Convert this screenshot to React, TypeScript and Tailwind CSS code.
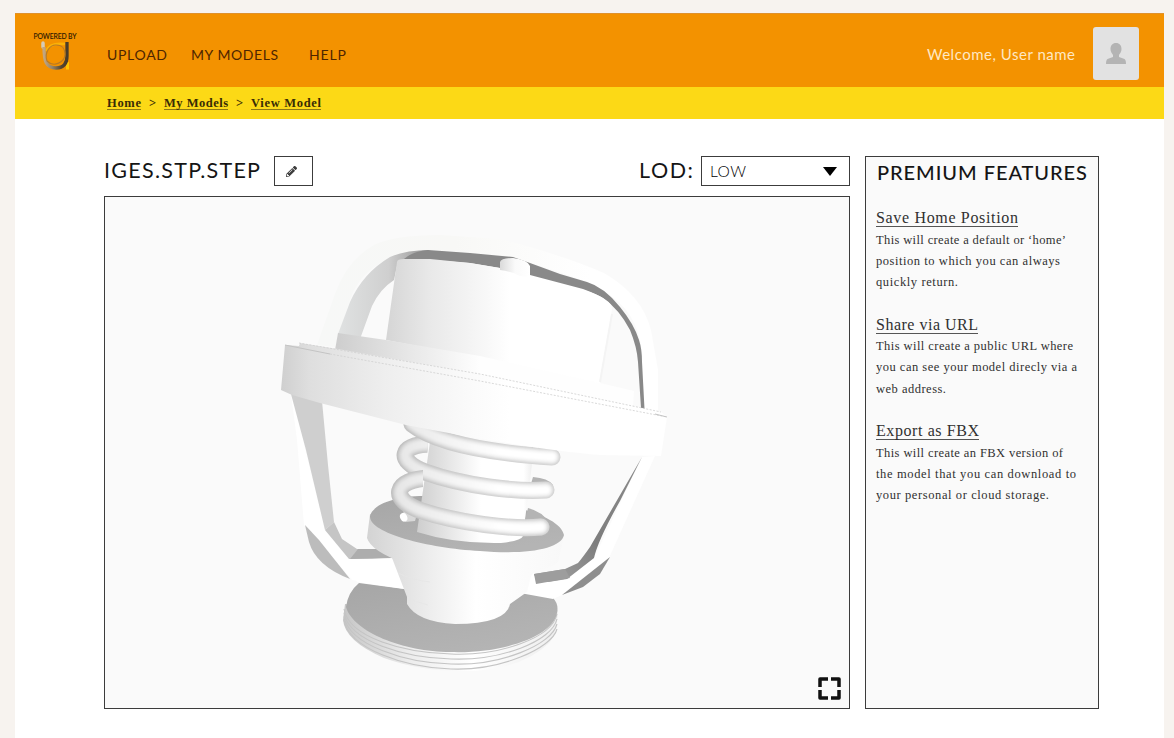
import { useLayoutEffect, useRef, useState, type ReactNode } from "react";
import { FaPencilAlt } from "react-icons/fa";

/* One line of text whose tracking is worked out so that it fills its measure. */
function Line({ width, children, className = "" }: { width: number; children: string; className?: string }) {
  const ref = useRef<HTMLSpanElement>(null);
  const [tracking, setTracking] = useState(0);

  useLayoutEffect(() => {
    const el = ref.current;
    if (!el) return;
    const previous = el.style.letterSpacing;
    el.style.letterSpacing = "0px";
    const natural = el.getBoundingClientRect().width;
    el.style.letterSpacing = previous;
    setTracking((width - natural) / Math.max(1, children.length - 1));
  }, [width, children]);

  return (
    <div className={`shrink-0 whitespace-nowrap ${className}`} style={{ width }}>
      <span ref={ref} className="inline-block" style={{ letterSpacing: tracking }}>{children}</span>
    </div>
  );
}

function Logo() {
  return (
    <div className="flex w-[46px] flex-col items-center pt-[18px]">
      <Line width={43} className="text-[6.8px] leading-[8px] font-semibold text-[#301900]">POWERED BY</Line>
      <svg width="34" height="32" viewBox="0 0 34 32" fill="none">
        <defs>
          <linearGradient id="logoDark" x1="0" y1="0" x2="1" y2="0">
            <stop offset="0" stopColor="#c3a680" />
            <stop offset="0.35" stopColor="#94856c" />
            <stop offset="0.75" stopColor="#55462f" />
            <stop offset="1" stopColor="#493c2b" />
          </linearGradient>
        </defs>
        <path d="M29.500 22v7.500" stroke="#ffc400" strokeWidth="3" />
        <path d="M8 11C11 4 18 3 27 4" stroke="#fbb106" strokeWidth="2.5" />
        <path d="M5 3v4" stroke="#d5cbb8" strokeWidth="3.500" strokeLinecap="round" />
        <path d="M6 7c0 14 2 21 12 21 8 0 11-5 11-12V2" stroke="url(#logoDark)" strokeWidth="3.300" />
        <path d="M9 21C6 12 12 5 18 5c7 0 9 5 9 9 0 8-11 14-18 7" stroke="#b87a24" strokeWidth="1.1" />
      </svg>
    </div>
  );
}

const strands = [
  { d: "M432 444C399 444 396 461 425 472C464 486 516 492 546 490", clip: "strandA" },
  { d: "M430 478C393 479 389 500 422 511C459 523 513 530 541 527", clip: "strandB" },
  { d: "M412 424Q445 450 552 457", clip: "strandTop" },
];

function Model() {
  return (
    <svg viewBox="105 197 744 511" className="block h-full w-full" role="img" aria-label="3D model">
      <defs>
        <linearGradient id="body" gradientUnits="userSpaceOnUse" x1="388" y1="0" x2="510" y2="0">
          <stop offset="0" stopColor="#d6d6d6" /><stop offset=".35" stopColor="#e9e9e9" />
          <stop offset=".8" stopColor="#f8f8f8" /><stop offset="1" stopColor="#fff" />
        </linearGradient>
        <linearGradient id="ring" gradientUnits="userSpaceOnUse" x1="281" y1="0" x2="510" y2="0">
          <stop offset="0" stopColor="#cfcfcf" /><stop offset=".12" stopColor="#dedede" />
          <stop offset=".45" stopColor="#eeeeee" /><stop offset=".85" stopColor="#fbfbfb" /><stop offset="1" stopColor="#fff" />
        </linearGradient>
        <linearGradient id="step" gradientUnits="userSpaceOnUse" x1="337" y1="0" x2="480" y2="0">
          <stop offset="0" stopColor="#cecece" /><stop offset=".5" stopColor="#e7e7e7" /><stop offset="1" stopColor="#fefefe" />
        </linearGradient>
        <linearGradient id="knob" x1="0" y1="0" x2="1" y2="0">
          <stop offset="0" stopColor="#dadada" /><stop offset=".5" stopColor="#fafafa" /><stop offset="1" stopColor="#fff" />
        </linearGradient>
        <linearGradient id="strap" x1="0" y1="0" x2="1" y2="0">
          <stop offset="0" stopColor="#e0e2e2" /><stop offset=".55" stopColor="#cfcfcf" /><stop offset="1" stopColor="#909090" />
        </linearGradient>
        <linearGradient id="outer" gradientUnits="userSpaceOnUse" x1="320" y1="0" x2="590" y2="0">
          <stop offset="0" stopColor="#f7f8f7" /><stop offset=".5" stopColor="#f8f8f6" /><stop offset="1" stopColor="#fff" />
        </linearGradient>
        <linearGradient id="shaft" gradientUnits="userSpaceOnUse" x1="417" y1="0" x2="533" y2="0">
          <stop offset="0" stopColor="#cecece" /><stop offset=".25" stopColor="#e4e4e4" />
          <stop offset=".55" stopColor="#fff" /><stop offset=".92" stopColor="#fff" /><stop offset="1" stopColor="#ededed" />
        </linearGradient>
        <linearGradient id="cup" gradientUnits="userSpaceOnUse" x1="367" y1="0" x2="565" y2="0">
          <stop offset="0" stopColor="#d3d3d3" /><stop offset=".3" stopColor="#ececec" />
          <stop offset=".55" stopColor="#fff" /><stop offset="1" stopColor="#f8f8f8" />
        </linearGradient>
        <linearGradient id="disc" x1="0" y1="0" x2=".6" y2="1">
          <stop offset="0" stopColor="#a6a6a6" /><stop offset="1" stopColor="#b4b4b4" />
        </linearGradient>
        <linearGradient id="rim" x1="0" y1="0" x2="1" y2="0">
          <stop offset="0" stopColor="#c6c6c6" /><stop offset=".3" stopColor="#ececec" /><stop offset=".6" stopColor="#fff" /><stop offset="1" stopColor="#eee" />
        </linearGradient>
        <linearGradient id="dark" x1="0" y1="1" x2="1" y2="0">
          <stop offset="0" stopColor="#a8a8a8" /><stop offset=".45" stopColor="#7d7d7d" /><stop offset="1" stopColor="#8b8b8b" />
        </linearGradient>
        <linearGradient id="tube" gradientUnits="userSpaceOnUse" x1="395" y1="0" x2="550" y2="0">
          <stop offset="0" stopColor="#bcbcbc" /><stop offset=".5" stopColor="#cfcfcf" /><stop offset="1" stopColor="#d2d2d2" />
        </linearGradient>
        <linearGradient id="tubeMid" gradientUnits="userSpaceOnUse" x1="395" y1="0" x2="500" y2="0">
          <stop offset="0" stopColor="#d6d6d6" /><stop offset="1" stopColor="#f0f0f0" />
        </linearGradient>
        <linearGradient id="tubeLight" gradientUnits="userSpaceOnUse" x1="395" y1="0" x2="500" y2="0">
          <stop offset="0" stopColor="#e6e6e6" /><stop offset=".5" stopColor="#f3f3f3" /><stop offset="1" stopColor="#fff" />
        </linearGradient>
        <filter id="soft" x="-10%" y="-30%" width="120%" height="160%"><feGaussianBlur stdDeviation="1.2" /></filter>
        <clipPath id="strandA"><path d="M380 400H430L427 462L600 470V600H380Z" /></clipPath>
        <clipPath id="strandB"><path d="M380 400H423V497L600 510V600H380Z" /></clipPath>
        <clipPath id="strandTop"><path d="M380 400H600V600H380Z" /></clipPath>
      </defs>

      {/* outer handle */}
      <path fill="url(#outer)" d="M317 345L335 294Q347 260 374 245Q394 235 440 235L500 239Q560 254 604 273Q642 295 651 330L658 370V412L644 410L642 353Q638 310 603 291Q585 279 530 263Q500 253 425 250Q364 257 350 300L335 347Z" />
      <path fill="url(#strap)" d="M338 334L350 302Q363 273 390 257Q405 250 430 250L397 266L394 280Q380 289 372 306L360 339Z" />
      <path fill="#898989" d="M404 259Q413 251 428 250L470 253L513 257L530 263L560 274L587 282Q604 287 620 307Q634 324 639 340Q642 349 642 362L644.500 409L641 408L638 362Q637 347 630 330Q619 309 603 298Q592 291 560 284L500 268L470 263L430 260Z" />
      <path fill="url(#body)" d="M386 340L397 262Q397 259 404 259L430 259L470 263L500 268L530 275L583 289Q613 300 612 309L600 384L480 358Z" />
      <path fill="none" stroke="#f4f4f4" d="M612 314L600 382" strokeWidth="2" />
      <path fill="url(#knob)" d="M500 262Q501 258 513 258Q528 260 530 266V276Q521 278 514 273Q507 271 500 270Z" />

      {/* stepped collar */}
      <path fill="url(#step)" d="M335 350L338 333L386 340L480 356L600 383L634 391L633 407L480 384Z" />

      {/* legs */}
      <path fill="#fff" d="M291 394L303 440L325 530L349 559L396 558L412 590L352 580L304 525L297 440Z" />
      <path fill="#cfcfcf" d="M291 394L322 401L328 465L334 522L325 530L306 450Z" />
      <path fill="#c5c5c5" d="M325 530L334 522L342 539L357 549L395 549L397 558L349 559Z" />
      <path fill="#adadad" d="M350 559L358 549H395L397 558Z" />
      <path fill="#bcbcbc" d="M305 525L319 540L350 579Q316 566 309 542Z" />
      <path fill="#fff" d="M655 456L609 558L562 595L553 599L520 593L533 573L567 579L594 558L642 457Z" />
      <path fill="url(#dark)" d="M642 457L590 547Q583 557 578 563L565 569L534 574L536 584L567 579L594 558Q598 540 620 501Z" />
      <path fill="#8e8e8e" d="M610 557L600 574L583 587L562 595Z" />

      {/* foot */}
      <path fill="url(#rim)" d="M345 604L343 620Q345 641 384 658Q420 671 463 671Q520 671 549 643Q557 634 558 610Z" />
      {[0, 5, 10, 15].map((y) => (
        <path key={y} d={`M344 ${609 + y * .75}C349 ${638 + y * .7} 405 ${653 + y} 451 ${654 + y}C500 ${656 + y} 552 ${638 + y * .7} 557 ${614 + y}`} fill="none" stroke="#c4c4c4" strokeWidth="1.1" />
      ))}
      <path fill="url(#disc)" d="M359 583Q348 592 346 607C353 632 404 652 450 652C501 654 553 637 557 613Q559 604 553 598L527 592L455 590L404 589Z" />
      <path fill="#fff" d="M349 560L396 558L412 590L357 582ZM520 593L533 575L563 589L553 599Z" />
      <path fill="#9d9d9d" d="M534 574L565 569L570 578L536 584Z" />

      {/* cup and cone */}
      <path fill="url(#cup)" d="M389 550L407 597L407 604Q417 622 455 624Q506 624 510 604L527 592L533 568Z" />
      <path fill="none" stroke="#e6e6e6" strokeWidth=".8" d="M398 573Q412 580 430 582M407 597Q415 602 428 605" />
      <path fill="url(#cup)" d="M370 514L367 538Q371 551 404 563Q443 576 490 576Q539 577 558 562L564 536Z" />
      <path fill="url(#disc)" d="M370 516C373 503 403 493 440 497C497 499 560 514 564 535C561 549 527 555 480 551C427 548 369 533 370 516Z" />
      <path fill="url(#shaft)" d="M431 435L417 532Q455 544 501 543Q521 541 523 536L534 448Z" />

      {/* spring */}
      <path fill="#b4b4b4" d="M533 477Q548 478 553 485L530 487ZM528 508Q543 512 548 522L525 521ZM538 447Q552 447 559 453L538 452Z" />
      <path fill="#d9d9d9" d="M403 508L412 506L417 514L415 521L405 522Z" />
      <ellipse cx="403.500" cy="517.500" rx="3.500" ry="4.500" fill="#fff" transform="rotate(-25 403 517)" />
      <g fill="none" strokeLinecap="round">
        {strands.map(({ d, clip }) => (
          <g key={d} clipPath={`url(#${clip})`}>
            <path d={d} stroke="url(#tube)" strokeWidth="17" />
            <path d={d} stroke="url(#tubeMid)" strokeWidth="13.500" filter="url(#soft)" />
            <path d={d} stroke="url(#tubeLight)" strokeWidth="8" filter="url(#soft)" />
          </g>
        ))}
      </g>

      {/* flange */}
      <path fill="url(#ring)" d="M285 345L299 346L300 343L338 349L480 374L661 412L667 417L661 456L600 455Q530 449 406 425L320 403L292 395L281 390Z" />
      <path d="M299 343L480 374L661 412M330 354L480 381L667 417" fill="none" stroke="#cfcfcf" strokeWidth=".8" strokeDasharray="2 1.5" />
      <path d="M285 345L330 354M655 414L667 417" stroke="#c4c4c4" />
    </svg>
  );
}

function Feature({ title, width, lines }: { title: string; width: number; lines: [string, number][] }) {
  return (
    <section className="h-[106.5px] text-[#303030]">
      <h3 className="h-[19px] w-fit border-b border-[#555] text-base leading-[19px]">
        <Line width={width}>{title}</Line>
      </h3>
      <div className="pt-[2.5px] text-[12.5px] leading-[21.3px]">
        {lines.map(([text, w]) => (
          <Line key={text} width={w}>{text}</Line>
        ))}
      </div>
    </section>
  );
}

function Crumb({ width, children }: { width: number; children: string }) {
  return (
    <a className="block h-[16px] border-b border-[#8c7814]">
      <Line width={width}>{children}</Line>
    </a>
  );
}

function Box({ className, children }: { className: string; children: ReactNode }) {
  return <div className={`border border-[#3c3c3c] ${className}`}>{children}</div>;
}

export default function App() {
  return (
    <div className="h-[738px] w-[1174px] overflow-hidden bg-[#f7f3ef] pl-[15px] pr-[10px] pt-[13px] font-['Lato',sans-serif]">
      <div className="h-full bg-white">
        <header className="flex h-[74px] border-t border-[#df912d] bg-[#f39200] text-[#4e2500]">
          <div className="ml-[17px] mr-[29px]"><Logo /></div>
          <nav className="flex pt-[31px] text-[14px] leading-5">
            <Line width={60}>UPLOAD</Line>
            <Line width={87} className="ml-[24px]">MY MODELS</Line>
            <Line width={37} className="ml-[31px]">HELP</Line>
          </nav>
          <div className="ml-auto flex text-[#ffe8c4]">
            <Line width={148} className="mt-[30px] text-[15px] leading-5">Welcome, User name</Line>
            <div className="ml-[18px] mr-[25px] mt-[13px] flex h-[53px] w-[46px] items-center justify-center rounded-[3px] bg-[#e2e2e2]">
              <svg width="20" height="21" viewBox="0 0 20 21" fill="#b4b4b4">
                <path d="M10 0C6.500 0 4.500 2.500 4.500 6C4.500 9 6 10.500 7 12V14L1.500 16Q0 17 0 21H20Q20 17 18.500 16L13 14V12C14 10.500 15.500 9 15.500 6C15.500 2.500 13.500 0 10 0Z" />
              </svg>
            </div>
          </div>
        </header>
        <div className="flex h-[32px] bg-[#fcd916] pl-[92px] pt-[7px] font-['Liberation_Serif',serif] text-[12.5px] leading-[19px] font-bold text-[#382c05]">
          <Crumb width={34}>Home</Crumb>
          <Line width={7} className="ml-[8px] mr-[8px]">&gt;</Line>
          <Crumb width={64}>My Models</Crumb>
          <Line width={7} className="ml-[8px] mr-[8px]">&gt;</Line>
          <Crumb width={70}>View Model</Crumb>
        </div>
        <main className="flex gap-[15px] pl-[89px] pt-[37px]">
          <div className="w-[746px]">
            <div className="mb-[10px] flex h-[30px] text-[21.5px] leading-[29px] text-[#151515]">
              <h1><Line width={156}>IGES.STP.STEP</Line></h1>
              <Box className="ml-[14px] flex w-[39px] items-center justify-center pr-[4px]">
                <FaPencilAlt size={11} color="#3d3d3d" />
              </Box>
              <Line width={54} className="ml-auto mr-[8px]">LOD:</Line>
              <Box className="flex w-[149px] items-center justify-between pl-[8px] pr-[12px] text-[15.5px] font-light text-black">
                <Line width={36}>LOW</Line>
                <svg width="14" height="9" viewBox="0 0 14 9"><path d="M0 0H14L7 9Z" /></svg>
              </Box>
            </div>
            <Box className="relative h-[513px] bg-[#fafafa]">
              <Model />
              <svg className="absolute bottom-[8px] right-[8px]" width="23" height="23" viewBox="0 0 23 23" fill="none" stroke="#111" strokeWidth="3.500" strokeLinejoin="round">
                <path d="M2 10V2H10M13 2H21V10M21 13V21H13M10 21H2V13" />
              </svg>
            </Box>
          </div>
          <Box className="h-[553px] w-[234px] bg-[#fafafa] pl-[11px] pt-px">
            <h2 className="mb-[20px] h-[30px] text-[20px] leading-[29px] font-medium text-[#151515]"><Line width={210}>PREMIUM FEATURES</Line></h2>
            <div className="-ml-px font-['Liberation_Serif',serif]">
              <Feature title="Save Home Position" width={142} lines={[["This will create a default or ‘home’", 190], ["position to which you can always", 184], ["quickly return.", 82]]} />
              <Feature title="Share via URL" width={102} lines={[["This will create a public URL where", 197], ["you can see your model direcly via a", 201], ["web address.", 70]]} />
              <Feature title="Export as FBX" width={103} lines={[["This will create an FBX version of", 187], ["the model that you can download to", 200], ["your personal or cloud storage.", 173]]} />
            </div>
          </Box>
        </main>
      </div>
    </div>
  );
}
